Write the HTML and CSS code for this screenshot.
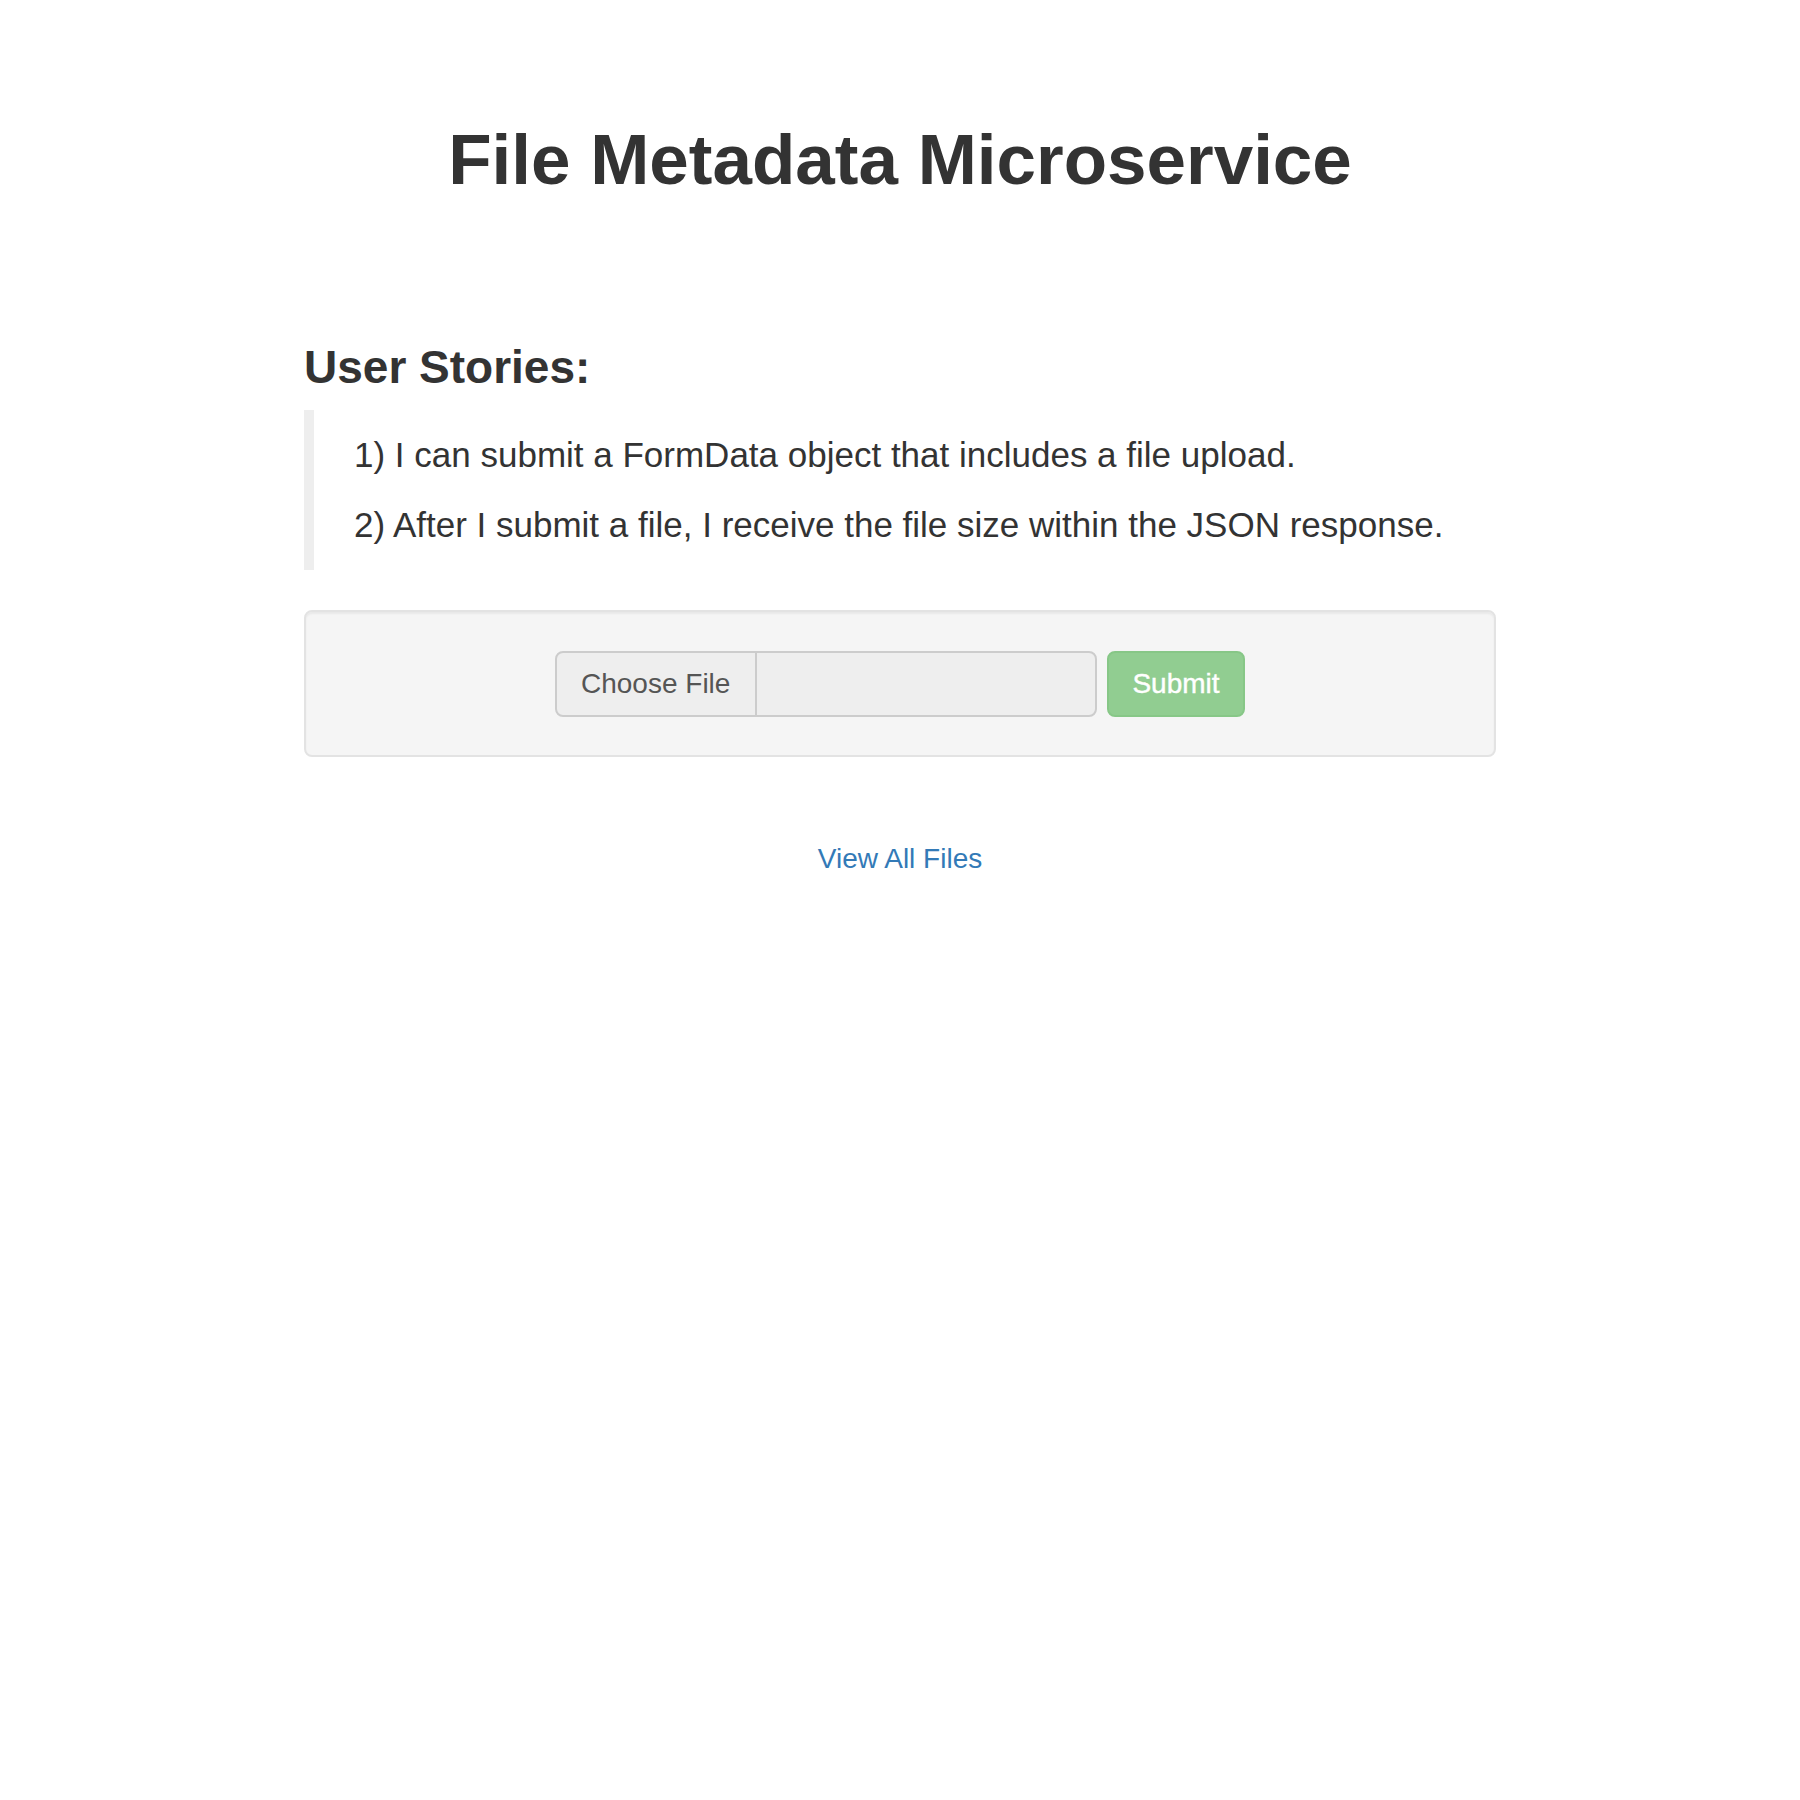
FILE: index.html
```html
<!DOCTYPE html>
<html lang="en">
<head>
<meta charset="utf-8">
<title>File Metadata Microservice</title>
<link rel="stylesheet" href="styles.css">
</head>
<body>
  <header class="page-header">
    <h1 class="title">File Metadata Microservice</h1>
  </header>
  <main class="container">
    <h3 class="section-title">User Stories:</h3>
    <blockquote class="stories">
      <p>1) I can submit a FormData object that includes a file upload.</p>
      <p>2) After I submit a file, I receive the file size within the JSON response.</p>
    </blockquote>
    <form class="well">
      <div class="file-input">
        <span class="file-btn">Choose File</span>
        <span class="file-name"></span>
      </div>
      <button type="button" class="btn-submit">Submit</button>
    </form>
    <div class="links">
      <a class="view-link" href="#">View All Files</a>
    </div>
  </main>
</body>
</html>
```

FILE: styles.css
```css
* {
  box-sizing: border-box;
}

html, body {
  margin: 0;
  padding: 0;
  background: #ffffff;
}

body {
  font-family: "Liberation Sans", Arial, sans-serif;
  color: #333333;
  width: 1800px;
  min-height: 1800px;
}

.page-header {
  text-align: center;
  padding-top: 120px;
}

.title {
  margin: 0;
  font-size: 71px;
  line-height: 80px;
  font-weight: 700;
  color: #333333;
}

.container {
  width: 1192px;
  margin: 0 auto;
  padding-top: 142px;
}

.section-title {
  margin: 0 0 18px 0;
  font-size: 46px;
  line-height: 50px;
  font-weight: 700;
  color: #333333;
}

.stories {
  margin: 0 0 40px 0;
  padding: 20px 40px;
  border-left: 10px solid #eeeeee;
}

.stories p {
  margin: 0 0 20px 0;
  font-size: 35px;
  line-height: 50px;
  color: #333333;
}

.stories p:last-child {
  margin-bottom: 0;
}

.well {
  margin: 0;
  padding: 39px 38px 38px;
  background: #f5f5f5;
  border: 2px solid #e3e3e3;
  border-radius: 8px;
  box-shadow: inset 0 2px 2px rgba(0, 0, 0, 0.05);
  display: flex;
  justify-content: center;
  align-items: stretch;
  gap: 10px;
}

.file-input {
  display: flex;
  width: 542px;
  height: 66px;
  background: #eeeeee;
  border: 2px solid #cccccc;
  border-radius: 8px;
  overflow: hidden;
}

.file-btn {
  display: flex;
  align-items: center;
  padding: 0 27px 0 24px;
  width: 200px;
  border-right: 2px solid #cccccc;
  font-size: 28px;
  color: #555555;
  white-space: nowrap;
}

.file-name {
  flex: 1;
}

.btn-submit {
  width: 138px;
  height: 66px;
  padding: 0 20px;
  background: #91cd91;
  border: 2px solid #87c787;
  border-radius: 8px;
  color: #ffffff;
  font-family: "Liberation Sans", Arial, sans-serif;
  font-size: 28px;
  line-height: 40px;
  -webkit-text-stroke: 0.4px #ffffff;
}

.links {
  margin-top: 82px;
  text-align: center;
  font-size: 28px;
  line-height: 40px;
}

.view-link {
  color: #337ab7;
  text-decoration: none;
}
```
